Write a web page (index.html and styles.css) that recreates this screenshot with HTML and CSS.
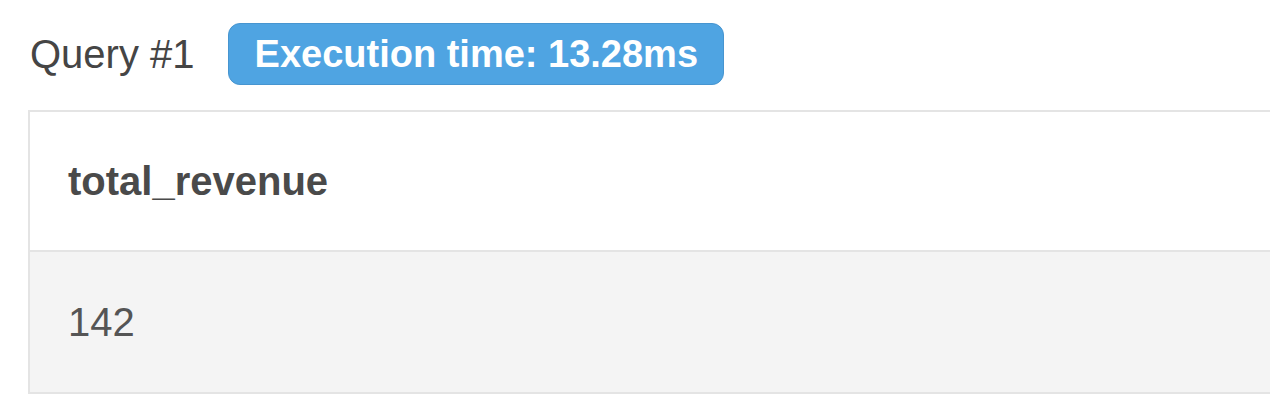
FILE: index.html
```html
<!DOCTYPE html>
<html>
<head>
<meta charset="utf-8">
<link rel="stylesheet" href="styles.css">
</head>
<body>
<div class="page">
  <div class="query-head">
    <span class="query-title">Query #1</span>
    <span class="badge">Execution time: 13.28ms</span>
  </div>
  <table class="results">
    <thead>
      <tr><th>total_revenue</th></tr>
    </thead>
    <tbody>
      <tr><td>142</td></tr>
    </tbody>
  </table>
</div>
</body>
</html>
```

FILE: styles.css
```css
html, body {
  margin: 0;
  padding: 0;
  background: #ffffff;
  overflow: hidden;
}
.page {
  padding: 23px 0 0 28px;
  font-family: "Liberation Sans", Arial, sans-serif;
  width: 1300px;
}
.query-head {
  display: flex;
  align-items: center;
  gap: 33px;
  height: 62px;
  margin-bottom: 25px;
}
.query-title {
  font-size: 40px;
  color: #454545;
  padding-left: 2px;
  line-height: 1;
}
.badge {
  box-sizing: border-box;
  height: 62px;
  display: flex;
  align-items: center;
  padding: 0 25px 0 26px;
  background: #4fa4e2;
  border: 1px solid #4795d0;
  border-radius: 12px;
  color: #ffffff;
  font-weight: bold;
  font-size: 38px;
  line-height: 1;
}
.results {
  border-collapse: separate;
  border-spacing: 0;
  width: 1300px;
  border: 2px solid #e4e4e4;
}
.results th, .results td {
  text-align: left;
  font-size: 40px;
  padding: 0 0 0 38px;
  box-sizing: border-box;
  height: 140px;
}
.results th {
  font-weight: bold;
  color: #4a4a4a;
  background: #ffffff;
  border-bottom: 2px solid #e4e4e4;
}
.results td {
  color: #555555;
  background: #f4f4f4;
}
```
